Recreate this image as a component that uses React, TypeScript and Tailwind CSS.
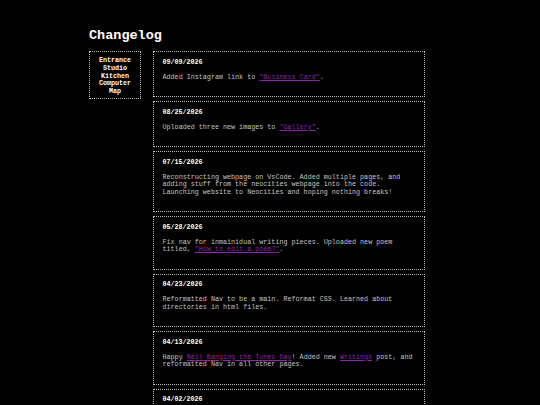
const entries: { date: string; body: React.ReactNode }[] = [
  {
    date: "09/09/2026",
    body: (
      <>
        Added Instagram link to <Link>"Business Card"</Link>.
      </>
    ),
  },
  {
    date: "08/25/2026",
    body: (
      <>
        Uploaded three new images to <Link>"Gallery"</Link>.
      </>
    ),
  },
  {
    date: "07/15/2026",
    body: (
      <>
        Reconstructing webpage on VsCode. Added multiple pages, and adding stuff
        from the neocities webpage into the code. Launching website to Neocities
        and hoping nothing breaks!
      </>
    ),
  },
  {
    date: "05/28/2026",
    body: (
      <>
        Fix nav for inmainidual writing pieces. Uploaded new poem titled,{" "}
        <Link>"How to edit a poem?"</Link>.
      </>
    ),
  },
  {
    date: "04/23/2026",
    body: (
      <>
        Reformatted Nav to be a main. Reformat CSS. Learned about directories in
        html files.
      </>
    ),
  },
  {
    date: "04/13/2026",
    body: (
      <>
        Happy <Link>Neil Banging the Tunes Day</Link>! Added new{" "}
        <Link>Writings</Link> post, and reformatted Nav in all other pages.
      </>
    ),
  },
  {
    date: "04/02/2026",
    body: (
      <>
        Created the Changelog page and started a new Neocities account.
      </>
    ),
  },
];

function Link({ children }: { children: React.ReactNode }) {
  return (
    <a className="text-[#8e24aa] underline" href="#">
      {children}
    </a>
  );
}

const navItems = ["Entrance", "Studio", "Kitchen", "Computer", "Map"];

export default function App() {
  return (
    <div className="min-h-screen bg-black font-['Liberation_Mono','Courier_New',monospace] text-[#c4c4c4]">
      <div className="mx-auto w-[362px] pt-[28px]">
        <h1 className="text-[13.5px] font-bold leading-[15px] text-white">
          Changelog
        </h1>
        <div className="mt-[8px] flex items-start gap-[12px]">
          <nav className="w-[52px] shrink-0 border border-dotted border-[#bdbdbd] pt-[5px] pb-[2.5px] text-center">
            {navItems.map((item) => (
              <div
                className="text-[6.7px] font-bold leading-[7.8px] text-white"
                key={item}
              >
                {item}
              </div>
            ))}
          </nav>
          <main className="flex w-[272px] shrink-0 flex-col gap-[4px]">
            {entries.map((entry) => (
              <section
                className="border border-dotted border-[#bdbdbd] pt-[6.5px] pr-[9.5px] pb-[15px] pl-[8.5px]"
                key={entry.date}
              >
                <h3 className="text-[6.7px] font-bold leading-[7.5px] text-white">
                  {entry.date}
                </h3>
                <p className="mt-[7.5px] text-[6.73px] leading-[7.5px]">
                  {entry.body}
                </p>
              </section>
            ))}
          </main>
        </div>
      </div>
    </div>
  );
}
